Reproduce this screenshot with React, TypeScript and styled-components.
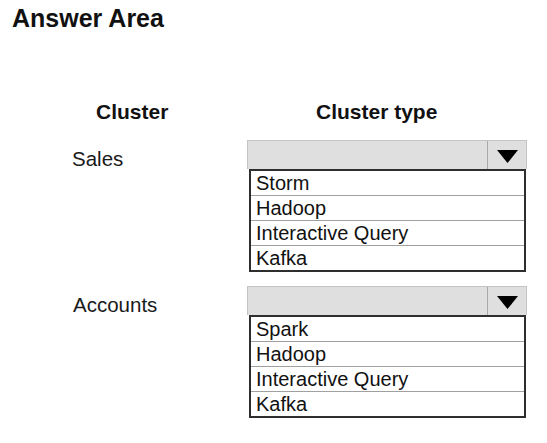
import React from 'react';
import styled, { createGlobalStyle } from 'styled-components';

const GlobalStyle = createGlobalStyle`
  body {
    margin: 0;
    background: #ffffff;
    font-family: 'Liberation Sans', Arial, sans-serif;
    color: #111111;
  }
`;

export default function App() {
  return (
    <Page>
      <GlobalStyle />
      <Title>Answer Area</Title>
      <Form>
        <HeadCell $indent={36}>Cluster</HeadCell>
        <HeadCell $indent={69}>Cluster type</HeadCell>
        {CLUSTERS.map((c) => (
          <React.Fragment key={c.id}>
            <Label $indent={c.indent}>{c.name}</Label>
            <Dropdown>
              <Select>
                <SelectValue />
                <ArrowBox>
                  <svg width="21" height="13" viewBox="0 0 21 13">
                    <polygon points="0,0 21,0 10.5,13" fill="#000" />
                  </svg>
                </ArrowBox>
              </Select>
              <OptionList>
                {c.options.map((o) => (
                  <Option key={o}>{o}</Option>
                ))}
              </OptionList>
            </Dropdown>
          </React.Fragment>
        ))}
      </Form>
    </Page>
  );
}

const Page = styled.div`
  width: 547px;
  height: 443px;
  overflow: hidden;
  padding-top: 4px;
  box-sizing: border-box;
`;

const Title = styled.h1`
  margin: 0 0 0 12px;
  font-size: 25px;
  line-height: 28px;
  font-weight: bold;
  color: #111;
`;

const Form = styled.div`
  display: grid;
  grid-template-columns: 187px 280px;
  row-gap: 14px;
  margin: 68px 0 0 60px;
`;

const HeadCell = styled.div<{ $indent: number }>`
  font-size: 21px;
  line-height: 24px;
  font-weight: bold;
  padding-left: ${(p) => p.$indent}px;
  margin-bottom: 2px;
`;

const Label = styled.div<{ $indent: number }>`
  font-size: 20.5px;
  line-height: 24px;
  padding: 7px 0 0 ${(p) => p.$indent}px;
  color: #1a1a1a;
`;

const Dropdown = styled.div`
  display: flex;
  flex-direction: column;
`;

const Select = styled.div`
  display: flex;
  height: 29px;
  box-sizing: border-box;
  background: #dfdfdf;
  border: 1px solid #c4c4c4;
  border-bottom: none;
`;

const SelectValue = styled.div`
  flex: 1;
`;

const ArrowBox = styled.div`
  width: 38px;
  display: flex;
  align-items: center;
  justify-content: center;
  border-left: 1px solid #a8a8a8;
  padding-top: 2px;
`;

const OptionList = styled.ul`
  list-style: none;
  margin: 0 1px 0 2px;
  padding: 0;
  border: 2px solid #2e2e2e;
  background: #fff;
`;

const Option = styled.li`
  height: 24px;
  line-height: 25px;
  font-size: 20px;
  padding-left: 5px;
  color: #111;
  & + & {
    border-top: 1px solid #a0a0a0;
  }
`;

const CLUSTERS = [
  {
    id: 1,
    name: 'Sales',
    indent: 12,
    options: ['Storm', 'Hadoop', 'Interactive Query', 'Kafka'],
  },
  {
    id: 2,
    name: 'Accounts',
    indent: 13,
    options: ['Spark', 'Hadoop', 'Interactive Query', 'Kafka'],
  },
];
